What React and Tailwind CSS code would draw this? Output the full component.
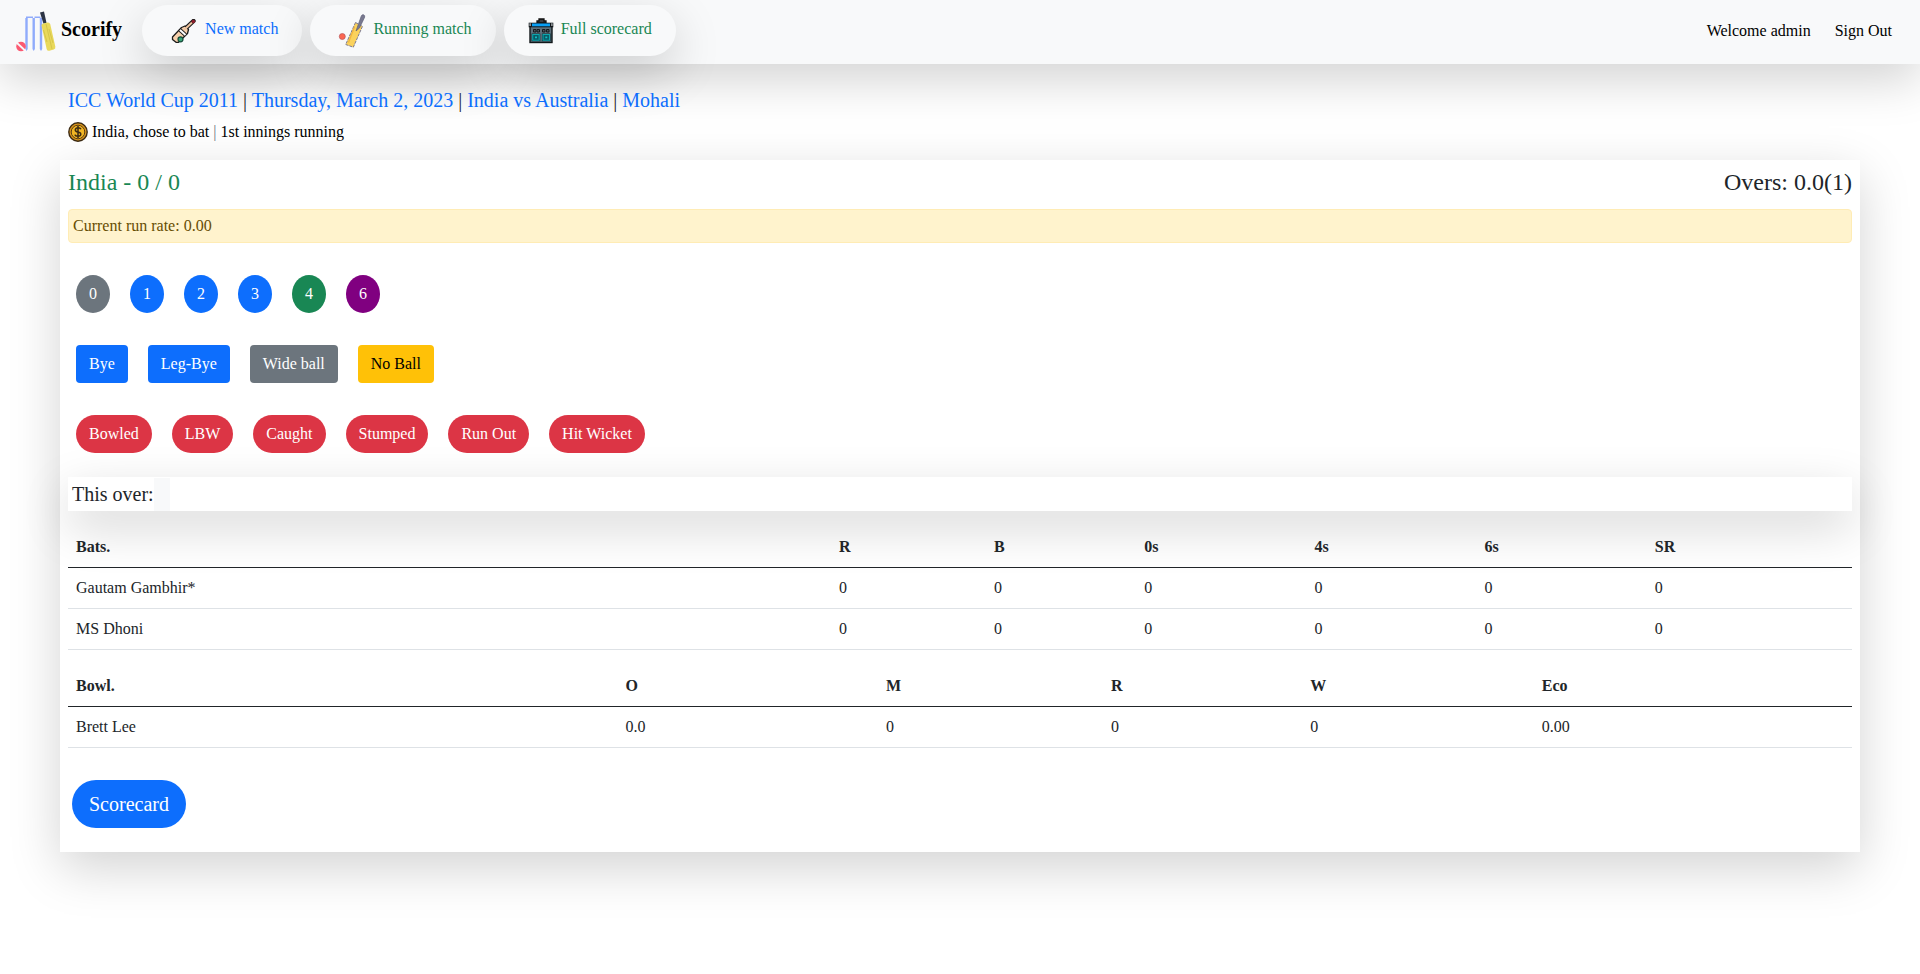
const runs = [
  { label: "0", tone: "bg-[#6c757d]" },
  { label: "1", tone: "bg-[#0d6efd]" },
  { label: "2", tone: "bg-[#0d6efd]" },
  { label: "3", tone: "bg-[#0d6efd]" },
  { label: "4", tone: "bg-[#198754]" },
  { label: "6", tone: "bg-[#800080]" },
];

const extras = [
  { label: "Bye", tone: "bg-[#0d6efd] text-white" },
  { label: "Leg-Bye", tone: "bg-[#0d6efd] text-white" },
  { label: "Wide ball", tone: "bg-[#6c757d] text-white" },
  { label: "No Ball", tone: "bg-[#ffc107] text-black" },
];

const wickets = ["Bowled", "LBW", "Caught", "Stumped", "Run Out", "Hit Wicket"];

function LogoIcon() {
  return (
    <svg viewBox="0 0 41 42" className="h-[42px] w-[41px] shrink-0" aria-hidden="true">
      <g fill="#8fabfb">
        <path d="M9.300 8h2.400v31l-1.200 2-1.200-2z" />
        <path d="M16.500 8h2.400v31l-1.200 2-1.200-2z" />
        <path d="M23.800 8h2.400v31l-1.200 2-1.200-2z" />
        <path d="M10 6.500h7V8h-7zM18.500 6.500h6V8h-6z" />
      </g>
      <path d="M24 2.500l4-1L30.500 13l-3 .8z" fill="#2c3444" />
      <path d="M25.500 15.500q0-1.500 2-2l4-1q2-.3 2.700 1.500l5.100 22.500q.5 2.300-1.500 3l-4.500 1.200q-2 .4-2.600-1.500z" fill="#e9d95b" />
      <path d="M30 14l6 25M27.500 20l3.500 12M33 19l4 14" stroke="#d6c54b" strokeWidth="1" fill="none" />
      <circle cx="5" cy="36.500" r="4.800" fill="#fb5a72" />
      <path d="M1 33l8 7.500" stroke="#f8f9fa" strokeWidth="1.800" />
    </svg>
  );
}

function NewMatchIcon() {
  return (
    <svg viewBox="0 0 35 24" className="h-6 w-[35px] shrink-0" aria-hidden="true">
      <path d="M19.500 9.500L27.500 2" stroke="#1b1b1b" strokeWidth="4.400" strokeLinecap="round" />
      <path d="M6.500 18L15.500 8.500l3.500-1.500 3.500 3.500-1 4L12.500 23.300H10L6.500 20.500z" fill="#f7d0ac" stroke="#1b1b1b" strokeWidth="1.300" strokeLinejoin="round" />
      <path d="M18 11L26 3.500" stroke="#f0c49f" strokeWidth="2" />
      <path d="M14 11l5.500 5" stroke="#1b1b1b" strokeWidth="3.800" />
      <path d="M14 11l5.500 5" stroke="#fff" strokeWidth="2" />
      <circle cx="27.300" cy="2.500" r="1.800" fill="#8d1f2c" />
      <circle cx="14.500" cy="20.300" r="2.500" fill="#3ba779" stroke="#174b3a" strokeWidth="1.200" />
    </svg>
  );
}

function RunningIcon() {
  return (
    <svg viewBox="0 0 35 36" className="h-9 w-[35px] shrink-0" aria-hidden="true">
      <path d="M21.500 9.500l7 3.800L19.300 34.200l-7.600-2.700z" fill="#fbd25c" stroke="#7d7b94" strokeWidth="1" strokeDasharray="3 1" strokeLinejoin="round" />
      <path d="M20.500 14l-6 15.500" stroke="#f0b43e" strokeWidth="1.200" />
      <path d="M22 18l5.300-15q.8-1.800 2.300-1.200 1.700.7 1 2.500L25.500 15z" fill="#78798f" stroke="#5f6078" strokeWidth=".7" />
      <circle cx="8.300" cy="23.500" r="3" fill="#fc6650" stroke="#b5575c" strokeWidth=".7" />
    </svg>
  );
}

function ScoreboardIcon() {
  return (
    <svg viewBox="0 0 29 28" className="h-7 w-[29px] shrink-0" aria-hidden="true">
      <path d="M9 6V4h2V2h5v2h2v2z" fill="#3a3d42" stroke="#111" strokeWidth="1.300" />
      <rect x="2" y="9" width="22" height="16.500" fill="#5d717d" stroke="#111719" strokeWidth="1.400" />
      <rect x=".7" y="5.700" width="24.600" height="4.600" fill="#11171c" />
      <rect x="4" y="6.500" width="18" height="2.800" fill="#089ff5" />
      <path d="M1.300 6.300H3V9H1.300zM23 6.300h1.700V9H23z" fill="#8b9093" />
      <path d="M5.500 12.500H8v2.500H5.500zM9 12.500h2.500v2.500H9zM14.500 12.500H17v2.500h-2.500zM18.500 12.500H21v2.500h-2.500z" fill="#4a5860" stroke="#15191c" strokeWidth="1" />
      <path d="M4.700 17.500h6.500v5.700H4.700zM15 17.500h6.500v5.700H15z" fill="#075a66" stroke="#0a2c33" strokeWidth="2.200" />
      <path d="M4.700 17.500h6.500v5.700H4.700zM15 17.500h6.500v5.700H15z" fill="#075a66" stroke="#0ea5ad" strokeWidth="1.100" />
      <path d="M7 19.500h2v1.800H7zM17.300 19.500h2v1.800h-2z" fill="#12bdc4" />
    </svg>
  );
}

function CoinIcon() {
  return (
    <svg viewBox="0 0 20 20" className="h-5 w-5 shrink-0" aria-hidden="true">
      <circle cx="10" cy="10" r="9.200" fill="#d9951b" stroke="#3b2a14" strokeWidth="1.400" />
      <circle cx="10" cy="10" r="6.800" fill="#f2b623" stroke="#5a3c12" strokeWidth="1" />
      <path d="M13 7.300Q12.300 5.800 10 5.800T7.300 7.900Q7.300 9.500 10 10t2.800 2.200Q12.700 14.200 10 14.200T7 12.600M10 4v12" fill="none" stroke="#3b2a14" strokeWidth="1.500" />
    </svg>
  );
}

function NavPill({ icon, label, tone }) {
  return (
    <a
      href="#"
      className={`flex h-[51px] items-center gap-1 rounded-full bg-[#f8f9fa] px-6 shadow-[0_16px_48px_rgba(0,0,0,0.175)] ${tone}`}
    >
      {icon}
      <span className="pb-1 whitespace-nowrap">{label}</span>
    </a>
  );
}

function ScoreTable({ name, columns, rows }) {
  return (
    <table aria-label={name} className="mt-4 w-full border-separate border-spacing-0 text-left">
      <thead>
        <tr>
          {columns.map((c) => (
            <th key={c} scope="col" className="border-b border-[#212529] p-2 font-bold">{c}</th>
          ))}
        </tr>
      </thead>
      <tbody>
        {rows.map((row) => (
          <tr key={row[0]}>
            {row.map((cell, i) => (
              <td key={i} className="border-b border-[#dee2e6] p-2">{cell}</td>
            ))}
          </tr>
        ))}
      </tbody>
    </table>
  );
}

export default function App() {
  return (
    <div className="font-['Liberation_Serif','Times_New_Roman',serif] text-base text-[#212529]">
      <nav className="flex items-center bg-[#f8f9fa] pt-[5px] pr-7 pb-2 pl-4 shadow-[0_16px_48px_rgba(0,0,0,0.175)]">
        <a href="#" className="flex items-center gap-1 text-xl font-bold text-black">
          <LogoIcon />
          <span className="pb-1">Scorify</span>
        </a>
        <div className="ml-5 flex gap-2">
          <NavPill icon={<NewMatchIcon />} label="New match" tone="text-[#0d6efd]" />
          <NavPill icon={<RunningIcon />} label="Running match" tone="text-[#198754]" />
          <NavPill icon={<ScoreboardIcon />} label="Full scorecard" tone="text-[#198754]" />
        </div>
        <div className="ml-auto flex gap-6 text-black">
          <span>Welcome admin</span>
          <a href="#">Sign Out</a>
        </div>
      </nav>

      <main className="px-15 pt-6 pb-24">
        <header className="px-2">
          <h1 className="text-xl leading-6">
            <span className="text-[#0d6efd]">ICC World Cup 2011</span> |{" "}
            <span className="text-[#0d6efd]">Thursday, March 2, 2023</span> |{" "}
            <span className="text-[#0d6efd]">India vs Australia</span> |{" "}
            <span className="text-[#0d6efd]">Mohali</span>
          </h1>
          <p className="mt-2 flex items-center gap-1 text-black">
            <CoinIcon />
            <span>India, chose to bat <span className="text-[#6c757d]">|</span> 1st innings running</span>
          </p>
        </header>

        <section className="mt-4 bg-white px-2 pt-2 pb-6 shadow-[0_16px_48px_rgba(0,0,0,0.175)]">
          <div className="flex justify-between text-2xl leading-[29px]">
            <h2 className="text-[#198754]">India - 0 / 0</h2>
            <p>Overs: 0.0(1)</p>
          </div>
          <p className="mt-3 rounded border border-[#ffecb5] bg-[#fff3cd] p-1 text-[#664d03]">
            Current run rate: 0.00
          </p>

          <div className="mt-8 flex flex-col gap-8 px-2">
            <div className="flex flex-wrap gap-5">
              {runs.map((r) => (
                <button key={r.label} type="button" className={`rounded-[50%] px-[13px] py-[7px] text-white ${r.tone}`}>
                  {r.label}
                </button>
              ))}
            </div>
            <div className="flex flex-wrap gap-5">
              {extras.map((e) => (
                <button key={e.label} type="button" className={`rounded px-[13px] py-[7px] ${e.tone}`}>
                  {e.label}
                </button>
              ))}
            </div>
            <div className="flex flex-wrap gap-5">
              {wickets.map((w) => (
                <button key={w} type="button" className="rounded-full bg-[#dc3545] px-[13px] py-[7px] text-white">
                  {w}
                </button>
              ))}
            </div>
          </div>

          <div className="mt-6 flex bg-white pt-px pl-1 text-xl shadow-[0_16px_48px_rgba(0,0,0,0.175)]">
            <h3 className="pt-1 pb-[5px] leading-6">This over:</h3>
            <span className="bg-[#f8f9fa] px-2" />
          </div>

          <ScoreTable
            name="Batting"
            columns={["Bats.", "R", "B", "0s", "4s", "6s", "SR"]}
            rows={[
              ["Gautam Gambhir*", "0", "0", "0", "0", "0", "0"],
              ["MS Dhoni", "0", "0", "0", "0", "0", "0"],
            ]}
          />
          <ScoreTable
            name="Bowling"
            columns={["Bowl.", "O", "M", "R", "W", "Eco"]}
            rows={[["Brett Lee", "0.0", "0", "0", "0", "0.00"]]}
          />

          <button type="button" className="mt-8 ml-1 rounded-full bg-[#0d6efd] px-[17px] py-[9px] text-xl leading-[30px] text-white">
            Scorecard
          </button>
        </section>
      </main>
    </div>
  );
}
